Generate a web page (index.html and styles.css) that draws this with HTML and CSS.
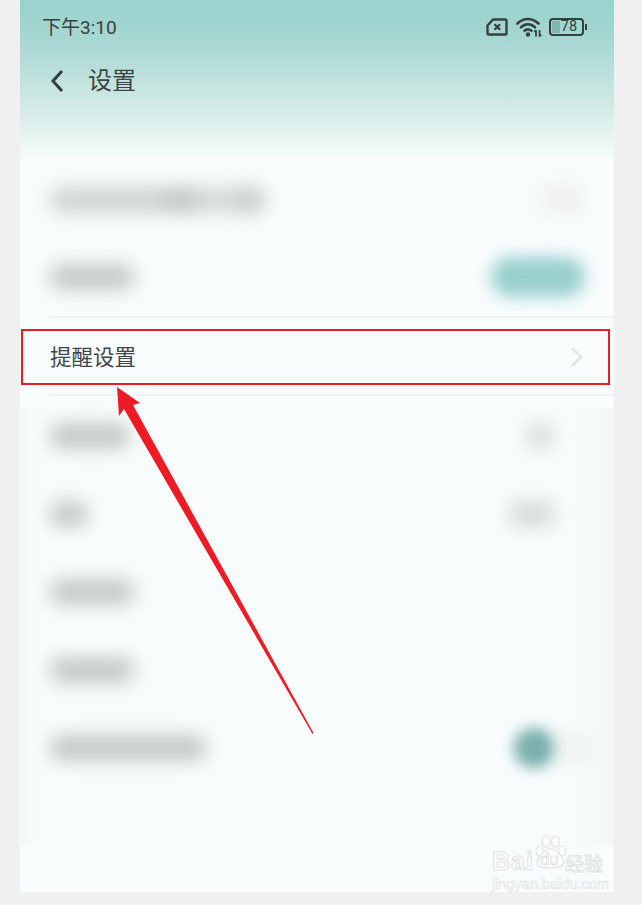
FILE: index.html
```html
<!DOCTYPE html>
<html lang="zh-CN">
<head>
    <meta charset="UTF-8">
    <meta name="viewport" content="width=device-width, initial-scale=1.0">
    <title>设置</title>
    <link rel="stylesheet" href="styles.css">
</head>
<body>
    <div class="phone">
        <div class="top">
            <div class="status">
                <span class="time">下午3:10</span>
                <div class="status-icons">
                    <svg class="icon-sim" width="22" height="18" viewBox="0 0 22 18">
                        <path d="M7 1.5H19.5a1 1 0 0 1 1 1V15.500a1 1 0 0 1-1 1H2.500a1 1 0 0 1-1-1V7.500Z" fill="none" stroke="#34413f" stroke-width="2.400" stroke-linejoin="round"/>
                        <path d="M8.500 6.200l5.600 5.600M14.100 6.200l-5.600 5.600" stroke="#34413f" stroke-width="2.200" fill="none"/>
                    </svg>
                    <svg class="icon-wifi" width="26" height="20" viewBox="0 0 26 20">
                        <path d="M1.500 6.500C7.500 .4 16 .4 22.500 6.500" fill="none" stroke="#34413f" stroke-width="2.600" stroke-linecap="round"/>
                        <path d="M5 10.300C9.200 6.300 14.800 6.300 19 10.300" fill="none" stroke="#34413f" stroke-width="2.600" stroke-linecap="round"/>
                        <path d="M8.500 13.800C10.700 12 13.300 12 15.500 13.800" fill="none" stroke="#34413f" stroke-width="2.600" stroke-linecap="round"/>
                        <circle cx="12" cy="17.500" r="2.200" fill="#34413f"/>
                        <path d="M20 19.500V13M18.300 15l1.700-2M23.500 13v6.500M23.500 19.500l1.700-2" stroke="#34413f" stroke-width="1.700" fill="none"/>
                    </svg>
                    <div class="battery">
                        <div class="battery-fill"></div>
                        <span class="battery-num">78</span>
                    </div>
                    <div class="battery-nub"></div>
                </div>
            </div>
            <div class="title-bar">
                <svg class="back" width="14" height="24" viewBox="0 0 14 24">
                    <path d="M12 2L3 12l9 10" fill="none" stroke="#353f3e" stroke-width="3"/>
                </svg>
                <span class="title">设置</span>
            </div>
        </div>

        <div class="row">
            <div class="smudge smudge-long"></div>
            <div class="smudge-right smudge-faint"></div>
        </div>
        <div class="row">
            <div class="smudge smudge-85"></div>
            <div class="pill"></div>
        </div>
        <div class="divider"></div>
        <div class="row row-plain">
            <span class="row-label">提醒设置</span>
            <svg class="chevron" width="14" height="22" viewBox="0 0 14 22">
                <path d="M2 2l9 9-9 9" fill="none" stroke="#e3e7e8" stroke-width="3"/>
            </svg>
        </div>
        <div class="divider divider-up"></div>

        <div class="panel">
            <div class="row row-first">
                <div class="smudge smudge-80"></div>
                <div class="smudge-right smudge-small"></div>
            </div>
            <div class="row">
                <div class="smudge smudge-40"></div>
                <div class="smudge-right smudge-wide"></div>
            </div>
            <div class="row">
                <div class="smudge smudge-85"></div>
            </div>
            <div class="row">
                <div class="smudge smudge-85"></div>
            </div>
            <div class="row">
                <div class="smudge smudge-155"></div>
                <div class="switch">
                    <div class="switch-track"></div>
                    <div class="switch-knob"></div>
                </div>
            </div>
        </div>
        <div class="bottom"></div>
    </div>

    <!-- annotation drawn on top of the screenshot -->
    <svg class="marks" width="642" height="905" viewBox="0 0 642 905">
        <rect x="22" y="330" width="587" height="54" fill="none" stroke="#ed1c24" stroke-width="2"/>
        <polygon points="117,387 140,403 133,405 313.500,733 312.500,734 124,409 119,416" fill="#ed1c24"/>
    </svg>

    <div class="watermark">
        <div class="wm-logo">
            <span class="wm-bai">Bai</span>
            <div class="wm-paw">
                <svg width="32" height="34" viewBox="0 0 32 34">
                    <g fill="#fff" stroke="#dfe2e3" stroke-width="1.200">
                        <ellipse cx="4.500" cy="16" rx="3.500" ry="5"/>
                        <ellipse cx="11" cy="6.500" rx="4" ry="5.500"/>
                        <ellipse cx="20.500" cy="6.500" rx="4" ry="5.500"/>
                        <ellipse cx="27" cy="16" rx="3.500" ry="5"/>
                        <path d="M15.500 14c5 0 13 8 13 13s-5 6-13 6-13-1-13-6 8-13 13-13Z"/>
                    </g>
                </svg>
                <span class="wm-du">du</span>
            </div>
            <span class="wm-jy">经验</span>
        </div>
        <div class="wm-url">jingyan.baidu.com</div>
    </div>
</body>
</html>
```

FILE: styles.css
```css
* {
    box-sizing: border-box;
}

body {
    margin: 0;
    width: 642px;
    height: 905px;
    overflow: hidden;
    background-color: #f0f0f0;
    font-family: "Noto Sans CJK SC", "Noto Sans", sans-serif;
    position: relative;
}

.phone {
    width: 594px;
    height: 892px;
    margin-left: 20px;
    background-color: #f8fcfd;
}

/* header area with the teal fade */
.top {
    height: 160px;
    padding: 0 27px 0 22px;
    background: linear-gradient(to bottom, #99d1cc 0, #a3d5d1 30px, #b4dcd8 62px, #cbe6e2 95px, #e0f1ee 128px, #f1f9f8 150px, #f8fcfd 160px);
}

.status {
    height: 54px;
    display: flex;
    align-items: center;
    justify-content: space-between;
}

.time {
    margin-top: -3px;
    font-family: Roboto, "Noto Sans CJK SC", sans-serif;
    font-size: 19px;
    color: #36423f;
}

.status-icons {
    display: flex;
    align-items: center;
}

.icon-sim {
    margin-right: 8px;
}

.icon-wifi {
    margin-right: 7px;
}

.battery {
    width: 35px;
    height: 18px;
    padding-left: 5px;
    border: 2px solid #34413f;
    border-radius: 4px;
    position: relative;
    display: flex;
    align-items: center;
    justify-content: center;
    overflow: hidden;
}

.battery-fill {
    position: absolute;
    left: 1px;
    top: 1px;
    bottom: 1px;
    width: 8px;
    background-color: #81b5b2;
}

.battery-num {
    position: relative;
    font-family: Roboto, sans-serif;
    font-size: 14.500px;
    line-height: 14px;
    color: #34413f;
}

.battery-nub {
    width: 2px;
    height: 6px;
    margin-left: 1px;
    background-color: #34413f;
}

.title-bar {
    height: 54px;
    display: flex;
    align-items: center;
}

.back {
    margin-left: 8px;
}

.title {
    margin: -5px 0 0 24px;
    font-size: 24px;
    line-height: 30px;
    color: #3c4544;
}

.row {
    height: 78px;
    padding: 0 30px;
    display: flex;
    align-items: center;
    justify-content: space-between;
}

.row-first {
    height: 66px;
    padding-bottom: 12px;
}

.row-plain {
    padding: 0 30px 0 30px;
}

.row-label {
    margin-top: -4px;
    font-size: 21.500px;
    color: #3f4648;
}

.divider {
    height: 2px;
    margin-left: 30px;
    background-color: #eff3f4;
}

.divider-up {
    margin: -2px 0 12px 30px;
    position: relative;
}

.panel {
    width: 596px;
    height: 438px;
    margin-left: -2px;
    padding: 1px 0 0 2px;
    background: linear-gradient(to right, #f3f7f8 0, #f8fcfd 22px, #f8fcfd 550px, #f4f7f8 100%);
}

/* blurred text and controls of the original screenshot */
.smudge {
    height: 26px;
    border-radius: 12px;
    background-color: #c4c9ca;
    filter: blur(9px);
}

.smudge-long {
    width: 216px;
    margin-top: 1px;
    background: linear-gradient(to right, #d0d4d5 0, #d0d4d5 48%, #bec2c3 60%, #d4d7d8 72%, #d9dcdd 80%, #c6cacb 92%, #d0d4d5 100%);
}

.smudge-85 {
    width: 84px;
}

.smudge-80 {
    width: 80px;
}

.smudge-40 {
    width: 38px;
}

.smudge-155 {
    width: 156px;
}

.smudge-right {
    border-radius: 12px;
    filter: blur(9px);
}

.smudge-faint {
    width: 40px;
    height: 28px;
    margin-right: 2px;
    background-color: #eeeeee;
}

.smudge-small {
    width: 28px;
    height: 26px;
    margin-right: 30px;
    background-color: #dadddd;
}

.smudge-wide {
    width: 46px;
    height: 26px;
    margin-right: 29px;
    background-color: #d8dbdb;
}

.pill {
    width: 94px;
    height: 40px;
    margin-right: -1px;
    border-radius: 20px;
    background-color: #98d0cd;
    filter: blur(8px);
}

.switch {
    width: 80px;
    height: 34px;
    margin-right: -9px;
    position: relative;
}

.switch-track {
    height: 34px;
    border-radius: 17px;
    background-color: #f0f4f4;
    filter: blur(6px);
}

.switch-knob {
    position: absolute;
    left: 1px;
    top: -3px;
    width: 40px;
    height: 40px;
    border-radius: 50%;
    background-color: #79b0ae;
    filter: blur(7px);
}

.bottom {
    height: 46px;
}

.marks {
    position: absolute;
    left: 0;
    top: 0;
}

.watermark {
    position: absolute;
    left: 492px;
    top: 835px;
    width: 118px;
}

.wm-logo {
    display: flex;
    align-items: flex-end;
    height: 38px;
    white-space: nowrap;
}

.wm-bai {
    flex-shrink: 0;
    font-family: "Liberation Sans", sans-serif;
    font-size: 25px;
    line-height: 24px;
    font-weight: bold;
    letter-spacing: 1px;
    color: #fff;
    -webkit-text-stroke: 1px #dfe2e3;
}

.wm-paw {
    flex-shrink: 0;
    width: 31px;
    height: 38px;
    margin-left: 1px;
    position: relative;
}

.wm-du {
    position: absolute;
    left: 5px;
    top: 17px;
    font-family: "Liberation Sans", sans-serif;
    font-size: 17px;
    line-height: 16px;
    color: #fff;
    -webkit-text-stroke: .8px #dfe2e3;
}

.wm-jy {
    flex-shrink: 0;
    margin: 0 0 -1px -1px;
    font-size: 19px;
    line-height: 22px;
    color: #fff;
    -webkit-text-stroke: .8px #dfe2e3;
}

.wm-url {
    margin-top: 4px;
    font-family: "Liberation Sans", sans-serif;
    font-size: 14.500px;
    line-height: 15px;
    white-space: nowrap;
    color: #fff;
    -webkit-text-stroke: .6px #e2e5e6;
}
```
